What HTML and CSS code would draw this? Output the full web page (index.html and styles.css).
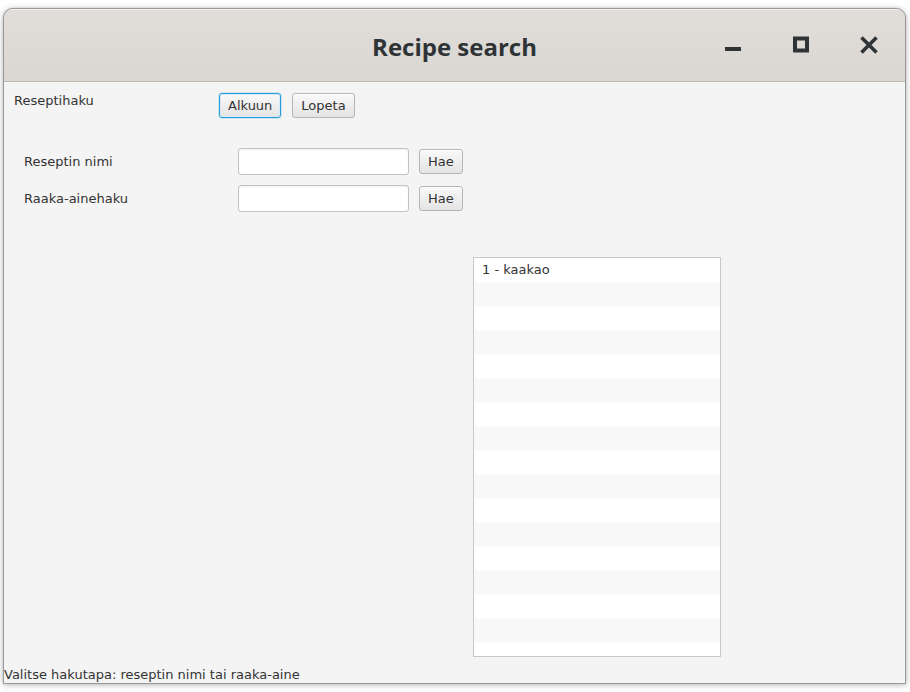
FILE: index.html
```html
<!DOCTYPE html>
<html>
<head>
<meta charset="utf-8">
<link rel="stylesheet" href="styles.css">
<title>Recipe search</title>
</head>
<body>
<div class="window">
  <header class="titlebar">
    <div class="tb-side"></div>
    <div class="tb-title">Recipe search</div>
    <div class="tb-controls">
      <span class="tb-btn"><svg width="18" height="18" viewBox="0 0 18 18"><rect x="1" y="11" width="16" height="4" fill="#2e3436"/></svg></span>
      <span class="tb-btn"><svg width="18" height="18" viewBox="0 0 18 18"><rect x="3" y="2.5" width="12" height="12" fill="none" stroke="#2e3436" stroke-width="4"/></svg></span>
      <span class="tb-btn"><svg width="20" height="18" viewBox="0 0 20 18"><path d="M2.5 1.5 L17.5 16.5 M17.5 1.5 L2.5 16.5" stroke="#2e3436" stroke-width="3.6" fill="none"/></svg></span>
    </div>
  </header>
  <main class="content">
    <div class="toprow">
      <span class="toplabel">Reseptihaku</span>
      <button class="btn focused">Alkuun</button>
      <button class="btn">Lopeta</button>
    </div>
    <div class="form">
      <div class="frow">
        <span class="flabel">Reseptin nimi</span>
        <input class="field" type="text">
        <button class="btn">Hae</button>
      </div>
      <div class="frow">
        <span class="flabel">Raaka-ainehaku</span>
        <input class="field" type="text">
        <button class="btn">Hae</button>
      </div>
    </div>
    <div class="list">
      <div class="cell">1 - kaakao</div>
    </div>
    <div class="status">Valitse hakutapa: reseptin nimi tai raaka-aine</div>
  </main>
</div>
</body>
</html>
```

FILE: styles.css
```css
html, body {
  margin: 0;
  padding: 0;
}
body {
  background: #ffffff;
  padding: 8px 0 0 3px;
  width: 910px;
  height: 692px;
  box-sizing: border-box;
  overflow: hidden;
  font-family: "DejaVu Sans", sans-serif;
  font-size: 13px;
  color: #333333;
}
.window {
  width: 903px;
  height: 676px;
  box-sizing: border-box;
  border: 1px solid #9a9a9a;
  border-radius: 10px 10px 0 0;
  box-shadow: 0 1px 6px rgba(0,0,0,0.28), 0 0 1px rgba(0,0,0,0.3);
  display: flex;
  flex-direction: column;
  overflow: hidden;
  background: #f4f4f4;
}
.titlebar {
  height: 72px;
  flex: none;
  border-bottom: 1px solid #bfb8b1;
  background: linear-gradient(#e1deda, #dad6d2);
  box-shadow: inset 0 1px 0 #f2f0ee;
  display: grid;
  grid-template-columns: 1fr auto 1fr;
  align-items: center;
}
.tb-title {
  font-family: "Open Sans", sans-serif;
  font-weight: 700;
  font-size: 24px;
  color: #2e3436;
  padding-top: 2px;
}
.tb-controls {
  display: flex;
  justify-content: flex-end;
  padding-right: 2px;
}
.tb-btn {
  width: 68px;
  height: 40px;
  display: flex;
  align-items: center;
  justify-content: center;
}
.content {
  flex: 1;
  display: flex;
  flex-direction: column;
  background: #f4f4f4;
}
.toprow {
  display: flex;
  align-items: flex-start;
  margin-top: 11px;
  padding-left: 10px;
  gap: 10px;
}
.toplabel {
  width: 195px;
  line-height: 16px;
}
.btn {
  font-family: "DejaVu Sans", sans-serif;
  font-size: 13px;
  color: #333333;
  height: 25px;
  padding: 0 8px;
  margin: 0;
  border: 1px solid #b5b5b5;
  border-radius: 3px;
  background: linear-gradient(#f9f9f9, #e4e4e4);
  box-shadow: inset 0 1px 0 #ffffff;
  line-height: 23px;
}
.btn.focused {
  border-color: #2d9bd8;
  box-shadow: 0 0 0 1px rgba(3,158,211,0.18), inset 0 0 0 1px #d4ecf8;
}
.toprow .btn.focused + .btn {
  margin-left: 1px;
}
.form {
  margin-top: 30px;
  padding-left: 20px;
  display: flex;
  flex-direction: column;
  gap: 10px;
}
.frow {
  display: flex;
  align-items: center;
}
.flabel {
  width: 214px;
  line-height: 16px;
}
.field {
  width: 171px;
  height: 27px;
  box-sizing: border-box;
  margin: 0 10px 0 0;
  padding: 0 6px;
  border: 1px solid #c2c2c2;
  border-radius: 3px;
  background: #ffffff;
  box-shadow: inset 0 1px 2px rgba(0,0,0,0.06);
  font-family: "DejaVu Sans", sans-serif;
  font-size: 13px;
}
.list {
  margin-top: 45px;
  margin-left: 469px;
  width: 248px;
  height: 400px;
  box-sizing: border-box;
  border: 1px solid #c8c8c8;
  background: repeating-linear-gradient(#ffffff 0, #ffffff 24px, #f9f9f9 24px, #f9f9f9 48px);
}
.cell {
  height: 24px;
  line-height: 24px;
  padding-left: 8px;
}
.status {
  margin-top: auto;
  line-height: 16px;
}
```
